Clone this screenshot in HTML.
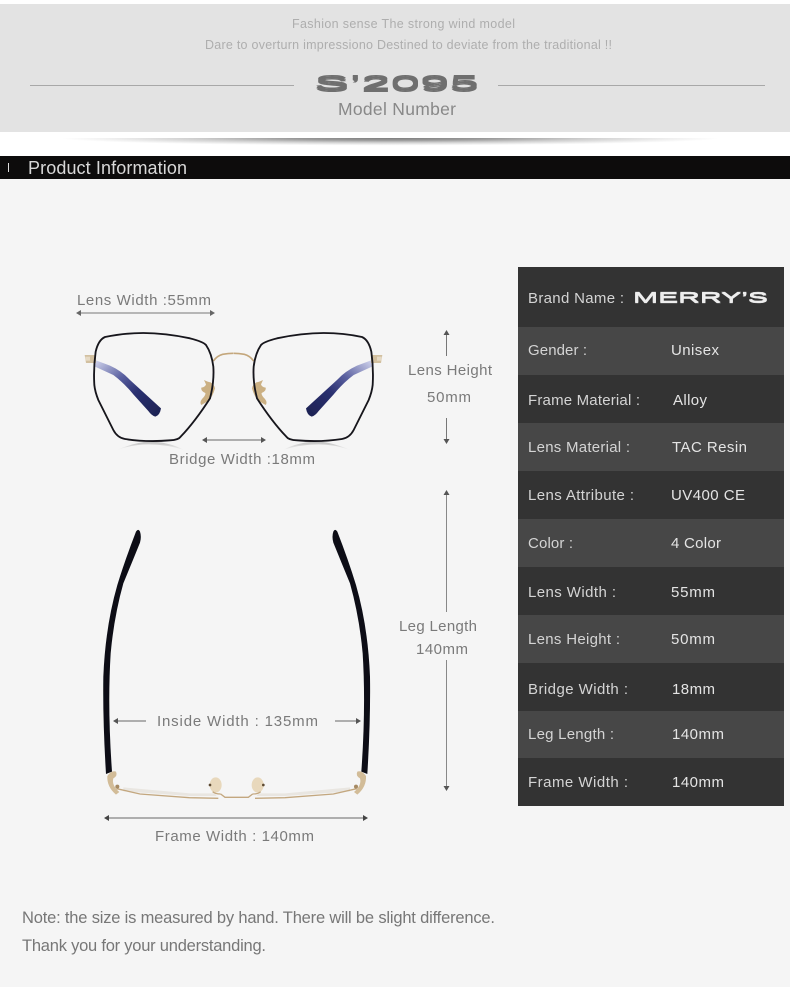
<!DOCTYPE html>
<html><head><meta charset="utf-8"><title>Product Information</title>
<style>
html,body{margin:0;padding:0;background:#fff}
svg{display:block}
text{font-family:"Liberation Sans",sans-serif}
.g{fill:#7a7a7a;font-size:15px}
.t{fill:#d4d4d4;font-size:15px}
.v{fill:#e4e4e4;font-size:15px}
</style></head><body>
<svg width="790" height="992" viewBox="0 0 790 992" xmlns="http://www.w3.org/2000/svg">
<defs>
<radialGradient id="sh" cx=".5" cy="0" r=".5">
<stop offset="0" stop-color="#7d7d7d"/><stop offset=".3" stop-color="#999"/><stop offset=".6" stop-color="#cfcfcf"/><stop offset=".85" stop-color="#efefef"/><stop offset="1" stop-color="#fff"/>
</radialGradient>
<linearGradient id="bl" x1="0" y1="0" x2="1" y2="1"><stop offset="0" stop-color="#d3d6ee"/><stop offset=".35" stop-color="#5a60a0"/><stop offset=".6" stop-color="#2a3070"/><stop offset="1" stop-color="#1c2150"/></linearGradient>
<linearGradient id="rf" x1="0" y1="0" x2="0" y2="1"><stop offset="0" stop-color="#bdbdbd"/><stop offset="1" stop-color="#f5f5f5"/></linearGradient>
<filter id="s" x="-10%" y="-10%" width="120%" height="120%"><feGaussianBlur stdDeviation=".3"/></filter>
<filter id="s3" x="-10%" y="-10%" width="120%" height="120%"><feGaussianBlur stdDeviation="1"/></filter>
<g id="half">
<path d="M110 375Q165 352 205 350Q265 350 312 375Q260 358 205 358Q160 358 110 375Z" fill="url(#rf)"/>
<path d="M45 105L90 122Q125 138 150 165L243 250Q240 270 226 275Q215 272 205 258L160 208Q130 172 100 150L45 125Z" fill="url(#bl)"/>
<path d="M14 90H48V114H18Z" fill="#d2c0a0"/><rect x="16" y="95" width="14" height="12" fill="#e6dac5"/>
<path d="M400 108Q412 92 428 88Q445 85 460 85" fill="none" stroke="#c4a77c" stroke-width="5"/>
<path d="M372 165Q386 172 392 172Q404 180 405 190Q398 215 385 228L364 240Q358 232 366 222Q378 210 376 204Q362 198 364 188Q376 186 378 178Z" fill="#cbb083"/>
<path d="M43 180Q40 130 47 80Q55 45 75 36Q130 24 190 24Q255 24 330 40Q370 50 378 60Q395 85 400 125Q403 170 390 220Q345 290 302 335Q295 345 270 346Q200 352 135 342Q112 338 100 315L55 225Q45 200 43 180Z" fill="none" stroke="#16131a" stroke-width="5.500"/>
</g>
</defs>

<rect width="790" height="992" fill="#fff"/>
<rect y="179" width="790" height="808" fill="#f5f5f5"/>
<rect y="4" width="790" height="128" fill="#e3e3e3"/>
<rect x="60" y="138" width="660" height="15" fill="url(#sh)"/>
<rect y="156" width="790" height="23" fill="#0d0c0c"/>

<text x="292" y="28" font-size="12.500" fill="#aeaeae" textLength="223">Fashion sense The strong wind model</text>
<text x="205" y="49" font-size="12.500" fill="#aeaeae" textLength="407">Dare to overturn impressiono Destined to deviate from the traditional !!</text>
<rect x="30" y="85" width="264" height="1" fill="#a8a8a8"/>
<rect x="498" y="85" width="267" height="1" fill="#a8a8a8"/>
<g fill="#6f6f6f" font-size="20.500">
<text x="314" y="89" textLength="165" lengthAdjust="spacingAndGlyphs">S’2095</text>
<text x="314" y="90.500" textLength="165" lengthAdjust="spacingAndGlyphs">S’2095</text>
<text x="314" y="92" textLength="165" lengthAdjust="spacingAndGlyphs">S’2095</text>
</g>
<text x="338" y="115" font-size="17.500" fill="#888" textLength="118">Model Number</text>

<rect x="8" y="163" width="1" height="9" fill="#ddd"/>
<text x="28" y="174" font-size="18" fill="#d8d8d8" textLength="159">Product Information</text>

<!-- front view -->
<text class="g" x="77" y="305" textLength="134">Lens Width :55mm</text>
<path d="M80 313H212" stroke="#777" stroke-width="1"/><path d="M76 313l5-3v6zM215 313l-5-3v6z" fill="#666"/>
<g filter="url(#s)">
<use href="#half" transform="translate(80 325) scale(.33333)"/>
<use href="#half" transform="translate(387 325) scale(-.33333 .33333)"/>
</g>
<path d="M205 440H263" stroke="#666" stroke-width="1"/><path d="M202 440l5-3v6zM266 440l-5-3v6z" fill="#555"/>
<text class="g" x="169" y="464" textLength="146">Bridge Width :18mm</text>

<path d="M446.500 334V356M446.500 418V441" stroke="#777" stroke-width="1"/><path d="M446.500 330l-3 5h6zM446.500 444l-3-5h6z" fill="#555"/>
<text class="g" x="408" y="375" textLength="84">Lens Height</text>
<text class="g" x="427" y="402" textLength="44">50mm</text>

<path d="M446.500 494V612M446.500 660V788" stroke="#888" stroke-width="1"/><path d="M446.500 490l-3 5h6zM446.500 791l-3-5h6z" fill="#555"/>
<text class="g" x="399" y="631" textLength="78">Leg Length</text>
<text class="g" x="416" y="654" textLength="52">140mm</text>

<!-- top view -->
<g transform="translate(90 520) scale(.33333)" filter="url(#s3)">
<path d="M138 35Q145 24 150 35Q155 50 150 68Q125 130 100 190Q72 290 62 400Q52 560 66 755L48 762Q38 600 40 470Q46 320 82 195Q105 120 138 35Z" fill="#0d1018"/>
<path d="M742 35Q735 24 730 35Q725 50 730 68Q755 130 780 190Q808 290 818 400Q828 560 814 755L832 762Q842 600 840 470Q834 320 798 195Q775 120 742 35Z" fill="#0d1018"/>
<path d="M52 768Q65 750 78 755Q84 768 70 775Q64 795 88 816L78 824Q50 800 52 768Z" fill="#d2bc98"/>
<path d="M828 768Q815 750 802 755Q796 768 810 775Q816 795 792 816L802 824Q830 800 828 768Z" fill="#d2bc98"/>
<path d="M100 802L300 820H375L380 828H300L100 814Z" fill="#e9e6e1"/>
<path d="M780 802L585 820H505L500 828H585L780 814Z" fill="#e9e6e1"/>
<path d="M80 806L150 822L298 833L385 835M800 806L730 822L585 833L495 835" fill="none" stroke="#c3a77f" stroke-width="4"/>
<path d="M392 822L405 832H475L488 822" fill="none" stroke="#c3a77f" stroke-width="4"/>
<ellipse cx="377" cy="795" rx="18" ry="23" fill="#e8d8bc"/><ellipse cx="503" cy="795" rx="18" ry="23" fill="#e8d8bc"/>
<path d="M368 815Q375 822 392 822M512 815Q505 822 488 822" fill="none" stroke="#c3a77f" stroke-width="4"/>
<circle cx="82" cy="800" r="6" fill="#a68a63"/><circle cx="798" cy="800" r="6" fill="#a68a63"/>
<circle cx="360" cy="795" r="4" fill="#5c4a33"/><circle cx="520" cy="795" r="4" fill="#5c4a33"/>
</g>
<path d="M116 721H146M335 721H358" stroke="#666" stroke-width="1"/><path d="M113 721l5-3v6zM361 721l-5-3v6z" fill="#555"/>
<text class="g" x="157" y="726" textLength="161">Inside  Width : 135mm</text>
<path d="M107 818H365" stroke="#666" stroke-width="1"/><path d="M104 818l5-3v6zM368 818l-5-3v6z" fill="#444"/>
<text class="g" x="155" y="841" textLength="159">Frame Width : 140mm</text>

<!-- table -->
<rect x="518" y="267" width="266" height="539" fill="#333"/>
<rect x="518" y="327" width="266" height="48" fill="#474747"/>
<rect x="518" y="423" width="266" height="48" fill="#474747"/>
<rect x="518" y="519" width="266" height="48" fill="#474747"/>
<rect x="518" y="615" width="266" height="48" fill="#474747"/>
<rect x="518" y="711" width="266" height="47" fill="#474747"/>

<text class="t" x="528" y="303" textLength="96">Brand Name :</text>
<g fill="#eee" font-size="15" stroke="#eee" stroke-width=".25">
<text x="633" y="302" textLength="135" lengthAdjust="spacingAndGlyphs">MERRY’S</text>
<text x="633" y="303" textLength="135" lengthAdjust="spacingAndGlyphs">MERRY’S</text>
</g>
<text class="t" x="528" y="355" textLength="59">Gender :</text><text class="v" x="671" y="355" textLength="48">Unisex</text>
<text class="t" x="528" y="405" textLength="112">Frame Material :</text><text class="v" x="673" y="405" textLength="34">Alloy</text>
<text class="t" x="528" y="452" textLength="102">Lens Material :</text><text class="v" x="672" y="452" textLength="75">TAC Resin</text>
<text class="t" x="528" y="500" textLength="106">Lens Attribute :</text><text class="v" x="671" y="500" textLength="74">UV400 CE</text>
<text class="t" x="528" y="548" textLength="45">Color :</text><text class="v" x="671" y="548" textLength="50">4 Color</text>
<text class="t" x="528" y="597" textLength="88">Lens Width :</text><text class="v" x="671" y="597" textLength="44">55mm</text>
<text class="t" x="528" y="644" textLength="92">Lens Height :</text><text class="v" x="671" y="644" textLength="44">50mm</text>
<text class="t" x="528" y="694" textLength="100">Bridge Width :</text><text class="v" x="672" y="694" textLength="43">18mm</text>
<text class="t" x="528" y="739" textLength="86">Leg Length :</text><text class="v" x="672" y="739" textLength="52">140mm</text>
<text class="t" x="528" y="787" textLength="100">Frame Width :</text><text class="v" x="672" y="787" textLength="52">140mm</text>

<text x="22" y="923" font-size="16.500" fill="#777" textLength="473">Note: the size is measured by hand. There will be slight difference.</text>
<text x="22" y="951" font-size="16.500" fill="#777" textLength="244">Thank you for your understanding.</text>
</svg>
</body></html>
